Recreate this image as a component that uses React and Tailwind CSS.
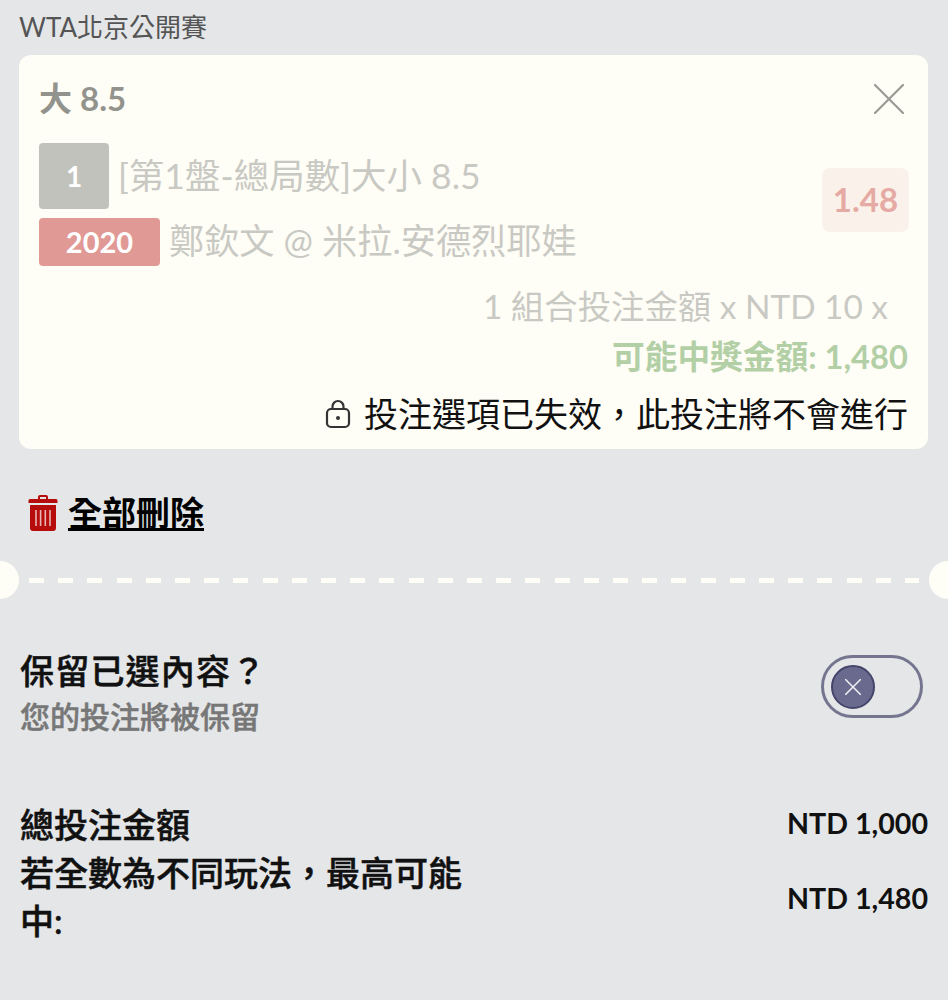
const font = "[font-family:Lato,'Noto_Sans_CJK_TC',sans-serif]"

function LockIcon() {
  return (
    <svg width="26" height="30" viewBox="0 0 26 30" fill="none" stroke="#333" strokeWidth="2.2">
      <rect x="2" y="10" width="22" height="18" rx="4" />
      <path d="M7.5 10V7.5a5.5 5.5 0 0 1 11 0V10" />
      <circle cx="13" cy="19" r="2" fill="#333" stroke="none" />
    </svg>
  )
}

function TrashIcon() {
  return (
    <svg width="30" height="38" viewBox="0 0 30 38">
      <path d="M10 5V3a2 2 0 0 1 2-2h6a2 2 0 0 1 2 2v2h8a1.5 1.5 0 0 1 1.5 1.5V9H.5V6.500A1.500 1.500 0 0 1 2 5zM12 5h6V3h-6z" fill="#b70c0c" fillRule="evenodd" />
      <path d="M2 11h26v23a3 3 0 0 1-3 3H5a3 3 0 0 1-3-3z" fill="#b70c0c" />
      <path d="M8 16v16M12.600 16v16M17.300 16v16M22 16v16" stroke="#e8b5b5" strokeWidth="1.600" />
    </svg>
  )
}

function CloseIcon({ size, color, width }) {
  return (
    <svg width={size} height={size} viewBox="0 0 30 30" stroke={color} strokeWidth={width} strokeLinecap="round">
      <path d="M1 1l28 28M29 1L1 29" />
    </svg>
  )
}

function BetCard() {
  return (
    <div className="rounded-xl bg-[#fffef6] pl-5 pr-[19px] pt-[20px] h-[394px]">
      <div className="flex items-center justify-between h-[48px] pr-[5px]">
        <div className="text-[33px] font-bold text-[#93938d] leading-none -mt-[2px]">大 8.5</div>
        <CloseIcon size={30} color="#9a9a94" width={2.2} />
      </div>
      <div className="mt-[20px] flex justify-between">
        <div>
          <div className="flex items-center gap-[9px]">
            <div className="w-[70px] h-[66px] rounded bg-[#c2c2bd] text-white text-[28px] font-bold flex items-center justify-center">1</div>
            <div className="text-[35.5px] text-[#c9c9c4] leading-none -mt-[1px]">[第1盤-總局數]大小 8.5</div>
          </div>
          <div className="mt-[9px] flex items-center gap-[9px]">
            <div className="w-[121px] h-[48px] rounded bg-[#e09994] text-white text-[29px] font-bold flex items-center justify-center">2020</div>
            <div className="text-[35.2px] text-[#c9c9c4] leading-none -mt-[2px]">鄭欽文 @ 米拉.安德烈耶娃</div>
          </div>
        </div>
        <div className="mt-[25px] w-[87px] h-[64px] rounded-lg bg-[#faf1ea] text-[#e6aaa5] text-[33px] font-bold flex items-center justify-center">1.48</div>
      </div>
      <div className="mt-[15px] pr-[1px] flex flex-col items-end">
        <div className="text-[33.4px] text-[#c9c9c4] leading-[50px] pr-[20px]">1 組合投注金額 x NTD 10 x</div>
        <div className="text-[32.7px] font-bold text-[#b3cfa6] leading-[52px]">可能中獎金額: 1,480</div>
        <div className="flex items-center gap-[13px] h-[62px]">
          <LockIcon />
          <div className="text-[34px] text-[#111] leading-none">投注選項已失效，此投注將不會進行</div>
        </div>
      </div>
    </div>
  )
}

function Divider() {
  return (
    <div className="relative mt-[26px] h-[38px] flex items-center px-[29px]">
      <div className="absolute left-[-19px] top-0 w-[38px] h-[38px] rounded-full bg-[#fffef6]" />
      <div className="h-[5px] w-full bg-[repeating-linear-gradient(90deg,#fffef6_0,#fffef6_15px,transparent_15px,transparent_29.2px)]" />
      <div className="absolute right-[-19px] top-0 w-[38px] h-[38px] rounded-full bg-[#fffef6]" />
    </div>
  )
}

function KeepToggle() {
  return (
    <div className="w-[102px] h-[63px] rounded-full border-[3px] border-[#75758f] flex items-center pl-[7px]">
      <div className="w-[44px] h-[44px] rounded-full bg-[#6a6a8e] border-[2px] border-[#45456b] flex items-center justify-center">
        <CloseIcon size={16} color="#f2f2f5" width={2.8} />
      </div>
    </div>
  )
}

export default function App() {
  return (
    <div className={`h-[1000px] w-[948px] overflow-hidden bg-[#e4e6e8] ${font}`}>
      <div className="px-[19px] pr-[20px]">
        <div className="h-[55px] pt-[8px] text-[26px] leading-[38px] text-[#555]">WTA北京公開賽</div>
        <BetCard />
      </div>

      <div className="mt-[42px] ml-[28px] flex items-center gap-[10px] h-[44px]">
        <TrashIcon />
        <div className="text-[34px] font-bold text-black underline leading-none">全部刪除</div>
      </div>

      <Divider />

      <div className="mt-[56px] pl-[20px] pr-[25px] flex items-start justify-between">
        <div className="-mt-[6px]">
          <div className="text-[34px] font-medium tracking-[1.2px] text-[#111] [-webkit-text-stroke:0.5px_#111] leading-[44px]">保留已選內容？</div>
          <div className="text-[30px] font-medium text-[#777] [-webkit-text-stroke:0.5px_#777] leading-[46px]">您的投注將被保留</div>
        </div>
        <KeepToggle />
      </div>

      <div className="mt-[62px] pl-[20px] pr-[20px] flex justify-between">
        <div className="text-[34px] font-medium text-[#111] [-webkit-text-stroke:0.5px_#111] leading-[48px]">總投注金額</div>
        <div className="text-[28.6px] font-bold text-[#111] leading-[44px]">NTD 1,000</div>
      </div>
      <div className="pl-[20px] pr-[20px] flex justify-between items-center">
        <div className="w-[445px] text-[34px] font-medium text-[#111] [-webkit-text-stroke:0.5px_#111] leading-[48px]">若全數為不同玩法，最高可能中:</div>
        <div className="text-[28.6px] font-bold text-[#111] leading-none mt-[2px]">NTD 1,480</div>
      </div>
    </div>
  )
}
